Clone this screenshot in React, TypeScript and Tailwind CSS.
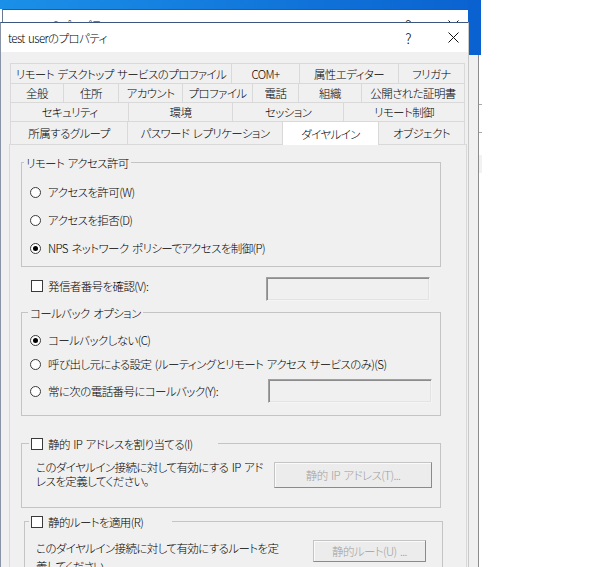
import React from "react";

const F = "font-['Noto_Sans_CJK_JP',sans-serif] [font-feature-settings:'palt'] font-light [word-spacing:1.5px]";

function Radio({ checked }: { checked?: boolean }) {
  return (
    <span className="flex h-[11px] w-[11px] shrink-0 items-center justify-center rounded-full border border-[#3a3a3a] bg-white">
      {checked && <span className="h-[5px] w-[5px] rounded-full bg-black" />}
    </span>
  );
}

function Check() {
  return <span className="block h-[12px] w-[12px] shrink-0 border border-[#3a3a3a] bg-white" />;
}

function Caption({ q }: { q: string }) {
  return (
    <div className="ml-auto flex items-center pr-[5px]">
      <span className="flex w-[20px] justify-center text-[14px] leading-[18px]">{q}</span>
      <span className="ml-[25px] flex w-[20px] justify-center">
        <svg width="11" height="11" viewBox="0 0 11 11">
          <path d="M0.5 0.5 L10.5 10.5 M10.5 0.5 L0.5 10.5" stroke="#111" strokeWidth="1" fill="none" />
        </svg>
      </span>
    </div>
  );
}

type Tab = [string, number, boolean?];
const rows: { h: string; tabs: Tab[] }[] = [
  {
    h: "h-[20px]",
    tabs: [
      ["リモート デスクトップ サービスのプロファイル", 221],
      ["COM+", 68],
      ["属性エディター", 99],
      ["フリガナ", 67],
    ],
  },
  {
    h: "h-[19px]",
    tabs: [
      ["全般", 53],
      ["住所", 55],
      ["アカウント", 64],
      ["プロファイル", 70],
      ["電話", 46],
      ["組織", 63],
      ["公開された証明書", 104],
    ],
  },
  {
    h: "h-[19px]",
    tabs: [
      ["セキュリティ", 118],
      ["環境", 104],
      ["セッション", 111],
      ["リモート制御", 122],
    ],
  },
  {
    h: "h-[23px]",
    tabs: [
      ["所属するグループ", 117],
      ["パスワード レプリケーション", 155],
      ["ダイヤルイン", 96, true],
      ["オブジェクト", 87],
    ],
  },
];

function TextBox({ className = "" }: { className?: string }) {
  return (
    <div
      className={`h-[24px] w-[164px] shrink-0 border border-t-[#a0a0a0] border-l-[#a0a0a0] border-b-[#f4f4f4] border-r-[#f4f4f4] bg-[#f0f0f0] shadow-[inset_1px_1px_0_#8c8c8c,inset_-1px_-1px_0_#e3e3e3] ${className}`}
    />
  );
}

function DisabledButton({ label, className = "" }: { label: string; className?: string }) {
  return (
    <div
      className={`flex shrink-0 items-center justify-center whitespace-nowrap border border-[#c4c4c4] border-b-[#8a8a8a] border-r-[#8a8a8a] bg-[#ececec] text-[#a0a0a0] shadow-[inset_1px_1px_0_#fafafa] ${className}`}
    >
      {label}
    </div>
  );
}

export default function App() {
  return (
    <div
      className={`relative h-[567px] w-[614px] overflow-hidden bg-white text-[11.5px] leading-[14px] tracking-[-0.6px] text-black ${F}`}
    >
      {/* desktop */}
      <div className="absolute left-0 top-0 h-[9px] w-[481px] bg-[linear-gradient(90deg,#1b90e8,#0a62d0)]" />

      {/* back window */}
      <div className="absolute left-[2px] top-[9px] h-[620px] w-[477px] border-l border-r border-t border-l-[#6a7890] border-r-[#8c8c8c] border-t-[#2d5a95] bg-[#f0f0f0]">
        <div className="flex h-[30px] w-[465px] items-center bg-white">
          <span className="ml-[47px] leading-[18px]">のプロパティ</span>
          <Caption q="?" />
        </div>
      </div>
      <div className="absolute left-[468px] top-0 h-[55px] w-[13px] bg-[#0a62d0]" />
      <div className="absolute left-[479px] top-[104px] h-px w-[3px] bg-[#a8a8a8]" />
      <div className="absolute left-[479px] top-[132px] h-px w-[3px] bg-[#a8a8a8]" />
      <div className="absolute left-[479px] top-[155px] h-[18px] w-[3px] bg-[#f2f2f2]" />

      {/* front dialog */}
      <div className="absolute left-0 top-[22px] h-[560px] w-[469px] border border-t-[#3b5680] border-l-[#8894a6] border-r-[#c9c9c9] bg-[#f0f0f0]">
        <div className="flex h-[29px] items-center bg-white pl-[7px]">
          <span className="leading-[18px]">test userのプロパティ</span>
          <Caption q="?" />
        </div>

        {/* tabs */}
        <div className="ml-[9px] mt-[11px] flex w-[455px] flex-col">
          {rows.map((r, ri) => (
            <div key={ri} className={`flex ${r.h}`}>
              {r.tabs.map(([t, w, sel], i) => {
                const last = i === r.tabs.length - 1;
                return (
                  <div
                    key={t}
                    style={{ width: w }}
                    className={`flex shrink-0 items-center justify-center overflow-hidden whitespace-nowrap border-l border-t border-[#d9d9d9] ${
                      last ? "border-r" : ""
                    } ${sel ? "relative z-10 h-[24px] bg-white" : "h-full bg-[#f0f0f0]"}`}
                  >
                    {t}
                  </div>
                );
              })}
            </div>
          ))}
        </div>

        {/* panel */}
        <div className="ml-[8px] flex h-[500px] w-[458px] flex-col border border-[#d9d9d9] bg-[#f0f0f0]">
          {/* remote access permission */}
          <div className="relative ml-[11px] mt-[17px] h-[105px] w-[420px] border border-[#c4c4c4] pl-[8px] pt-[15px]">
            <span className="absolute -top-[9px] left-[2px] bg-[#f0f0f0] px-[2px] leading-[18px]">リモート アクセス許可</span>
            <div className="flex h-[28px] items-center gap-[7px]">
              <Radio />
              <span>アクセスを許可(W)</span>
            </div>
            <div className="flex h-[28px] items-center gap-[7px]">
              <Radio />
              <span>アクセスを拒否(D)</span>
            </div>
            <div className="flex h-[28px] items-center gap-[7px]">
              <Radio checked />
              <span>NPS ネットワーク ポリシーでアクセスを制御(P)</span>
            </div>
          </div>

          {/* caller id */}
          <div className="mt-[10px] flex h-[24px] items-start pl-[21px]">
            <div className="mt-[1px] flex h-[16px] items-center gap-[5px]">
              <Check />
              <span>発信者番号を確認(V):</span>
            </div>
            <TextBox className="ml-auto mr-[36px]" />
          </div>

          {/* callback */}
          <div className="relative ml-[11px] mt-[11px] h-[104px] w-[420px] border border-[#c4c4c4] pl-[8px] pt-[15px]">
            <span className="absolute -top-[9px] left-[6px] bg-[#f0f0f0] px-[2px] leading-[18px]">コールバック オプション</span>
            <div className="flex h-[24px] items-center gap-[7px]">
              <Radio checked />
              <span>コールバックしない(C)</span>
            </div>
            <div className="flex h-[24px] items-center gap-[7px]">
              <Radio />
              <span className="whitespace-nowrap">呼び出し元による設定 (ルーティングとリモート アクセス サービスのみ)(S)</span>
            </div>
            <div className="mt-[3px] flex h-[24px] items-center gap-[7px]">
              <Radio />
              <span>常に次の電話番号にコールバック(Y):</span>
              <TextBox className="ml-auto mr-[8px]" />
            </div>
          </div>

          {/* static ip */}
          <div className="relative ml-[11px] mt-[27px] flex h-[65px] w-[420px] items-start border border-[#c4c4c4] pl-[14px] pt-[16px]">
            <div className="absolute -top-[9px] left-[7px] flex h-[18px] w-[189px] items-center gap-[5px] bg-[#f0f0f0] px-[2px]">
              <Check />
              <span className="whitespace-nowrap">静的 IP アドレスを割り当てる(I)</span>
            </div>
            <p className="whitespace-nowrap leading-[14px]">
              このダイヤルイン接続に対して有効にする IP アド
              <br />
              レスを定義してください。
            </p>
            <DisabledButton label="静的 IP アドレス(T)..." className="ml-auto mr-[8px] mt-[2px] h-[26px] w-[158px]" />
          </div>

          {/* static routes */}
          <div className="relative ml-[14px] mt-[13px] flex h-[80px] w-[419px] items-start border border-[#c4c4c4] pl-[11px] pt-[17px]">
            <div className="absolute -top-[9px] left-[4px] flex h-[18px] w-[143px] items-center gap-[5px] bg-[#f0f0f0] px-[2px]">
              <Check />
              <span className="whitespace-nowrap">静的ルートを適用(R)</span>
            </div>
            <p className="whitespace-nowrap leading-[18px]">
              このダイヤルイン接続に対して有効にするルートを定
              <br />
              義してください。
            </p>
            <DisabledButton label="静的ルート(U) ..." className="ml-auto mr-[16px] mt-[1px] h-[22px] w-[113px]" />
          </div>
        </div>
      </div>
    </div>
  );
}
